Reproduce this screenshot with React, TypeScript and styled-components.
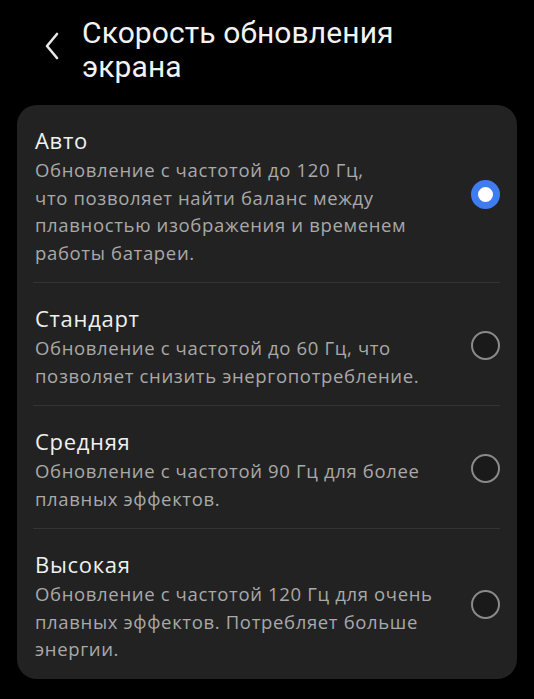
import React from "react";
import styled, { createGlobalStyle } from "styled-components";

const GlobalStyle = createGlobalStyle`
  html, body {
    margin: 0;
    padding: 0;
    background: #000000;
  }
  body {
    font-family: "Open Sans", Roboto, "Noto Sans", "Liberation Sans", sans-serif;
    -webkit-font-smoothing: antialiased;
  }
`;

const Page = styled.div`
  width: 534px;
  min-height: 699px;
  background: #000000;
  box-sizing: border-box;
  padding-top: 16px;
`;

const Header = styled.header`
  display: flex;
  align-items: flex-start;
  padding: 0 0 0 38px;
  height: 89px;
`;

const BackButton = styled.button`
  display: flex;
  align-items: center;
  justify-content: center;
  width: 28px;
  height: 40px;
  margin-top: 10px;
  margin-right: 16px;
  padding: 0;
  border: none;
  background: transparent;
  color: #e8e8e8;
`;

const Title = styled.h1`
  margin: 0;
  font-family: Roboto, "Noto Sans", sans-serif;
  font-size: 30px;
  font-weight: 400;
  line-height: 34px;
  color: #f2f2f2;
  letter-spacing: 0.1px;
`;

const Card = styled.section`
  margin: 0 17px;
  background: #222222;
  border-radius: 20px;
  padding: 0 17px 0 16px;
`;

const Row = styled.label<{ $last?: boolean }>`
  display: flex;
  align-items: center;
  justify-content: space-between;
  gap: 12px;
  padding: 20px 0 16px 2px;
  border-bottom: ${(p) => (p.$last ? "none" : "1px solid #343434")};
`;

const TextBlock = styled.div`
  display: flex;
  flex-direction: column;
  gap: 1px;
`;

const OptionTitle = styled.div`
  font-size: 22px;
  line-height: 30px;
  letter-spacing: 0.7px;
  color: #f0f0f0;
`;

const Description = styled.div`
  font-size: 18.5px;
  line-height: 27.5px;
  letter-spacing: 0.65px;
  color: #a9a9a9;
`;

const Line = styled.span`
  display: block;
  white-space: nowrap;
`;

const Radio = styled.span<{ $checked?: boolean }>`
  flex: none;
  width: 29px;
  height: 29px;
  margin-top: -2px;
  box-sizing: border-box;
  border-radius: 50%;
  border: ${(p) => (p.$checked ? "7px solid #3f7cf2" : "2px solid #8a8a8a")};
  background: ${(p) => (p.$checked ? "#ffffff" : "#1a1a1a")};
`;

type Option = { title: string; lines: string[]; checked?: boolean };

const options: Option[] = [
  {
    title: "Авто",
    lines: [
      "Обновление с частотой до 120 Гц,",
      "что позволяет найти баланс между",
      "плавностью изображения и временем",
      "работы батареи.",
    ],
    checked: true,
  },
  {
    title: "Стандарт",
    lines: ["Обновление с частотой до 60 Гц, что", "позволяет снизить энергопотребление."],
  },
  {
    title: "Средняя",
    lines: ["Обновление с частотой 90 Гц для более", "плавных эффектов."],
  },
  {
    title: "Высокая",
    lines: [
      "Обновление с частотой 120 Гц для очень",
      "плавных эффектов. Потребляет больше",
      "энергии.",
    ],
  },
];

export default function App() {
  return (
    <>
      <GlobalStyle />
      <Page>
        <Header>
          <BackButton aria-label="Назад">
            <svg width="16" height="28" viewBox="0 0 16 28" fill="none">
              <path
                d="M13 2 L3 14 L13 26"
                stroke="currentColor"
                strokeWidth="2.6"
                strokeLinecap="round"
                strokeLinejoin="round"
              />
            </svg>
          </BackButton>
          <Title>
            Скорость обновления
            <br />
            экрана
          </Title>
        </Header>
        <Card>
          {options.map((o, i) => (
            <Row key={o.title} $last={i === options.length - 1}>
              <TextBlock>
                <OptionTitle>{o.title}</OptionTitle>
                <Description>
                  {o.lines.map((l) => (
                    <Line key={l}>{l}</Line>
                  ))}
                </Description>
              </TextBlock>
              <Radio $checked={o.checked} />
            </Row>
          ))}
        </Card>
      </Page>
    </>
  );
}
